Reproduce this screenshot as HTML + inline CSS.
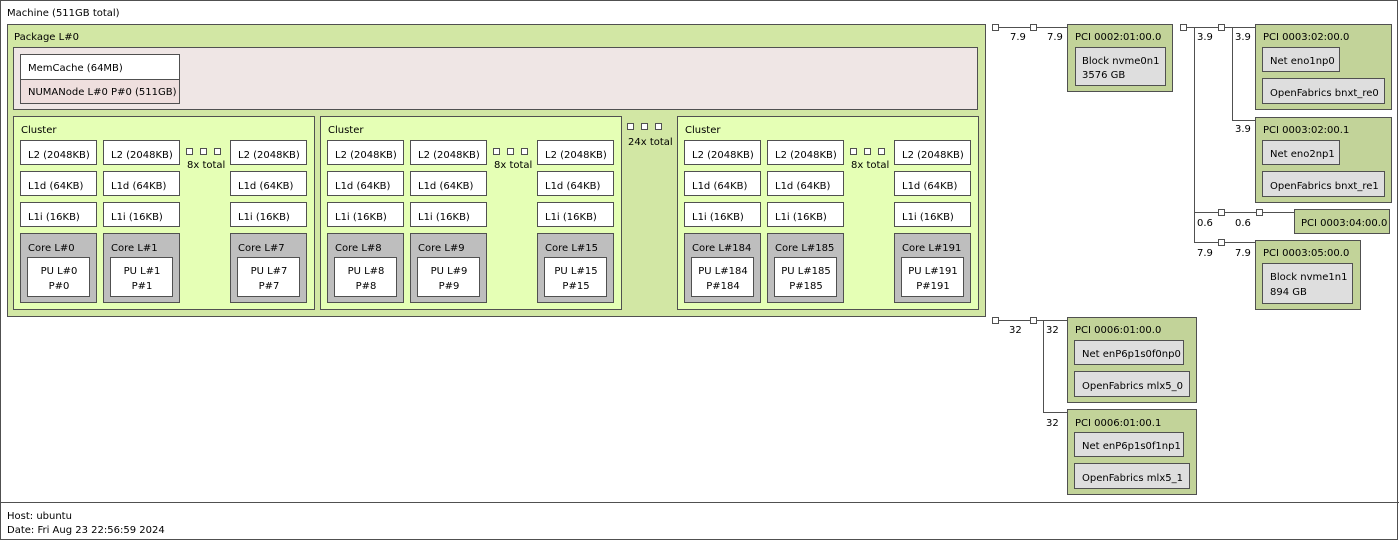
<!DOCTYPE html>
<html><head><meta charset="utf-8"><style>
html,body{margin:0;padding:0;background:#fff;width:1399px;height:541px;overflow:hidden}
svg text{font-family:"DejaVu Sans","Liberation Sans",sans-serif;font-size:10px;fill:#000}
</style></head><body>
<svg width="1399" height="541" xmlns="http://www.w3.org/2000/svg" shape-rendering="crispEdges">
<g stroke="#505050" stroke-width="1">
<rect x="0.5" y="0.5" width="1397" height="539" fill="#fff"/>
<line x1="0" y1="502.5" x2="1399" y2="502.5"/>
<rect x="7.5" y="24.5" width="978" height="292" fill="#d2e7a4"/>
<rect x="13.5" y="47.5" width="964" height="62" fill="#efe6e5"/>
<rect x="20.5" y="54.5" width="159" height="25" fill="#fff"/>
<rect x="20.5" y="79.5" width="159" height="24" fill="#efdfde"/>
</g>
<text x="7" y="16">Machine (511GB total)</text>
<text x="14" y="40">Package L#0</text>
<text x="28" y="71">MemCache (64MB)</text>
<text x="28" y="95">NUMANode L#0 P#0 (511GB)</text>
<g id="c1">
<rect x="13.5" y="116.5" width="301" height="193" fill="#e5ffb5" stroke="#505050"/>
<text x="21" y="133">Cluster</text>
<g stroke="#505050" fill="#fff">
<rect x="20.5" y="140.5" width="76" height="24"/><rect x="103.5" y="140.5" width="76" height="24"/><rect x="230.5" y="140.5" width="76" height="24"/>
<rect x="20.5" y="171.5" width="76" height="24"/><rect x="103.5" y="171.5" width="76" height="24"/><rect x="230.5" y="171.5" width="76" height="24"/>
<rect x="20.5" y="202.5" width="76" height="24"/><rect x="103.5" y="202.5" width="76" height="24"/><rect x="230.5" y="202.5" width="76" height="24"/>
<rect x="20.5" y="233.5" width="76" height="69" fill="#bebebe"/><rect x="103.5" y="233.5" width="76" height="69" fill="#bebebe"/><rect x="230.5" y="233.5" width="76" height="69" fill="#bebebe"/>
<rect x="27.5" y="257.5" width="62" height="39"/><rect x="110.5" y="257.5" width="62" height="39"/><rect x="237.5" y="257.5" width="62" height="39"/>
<rect x="186.5" y="148.5" width="6" height="6"/><rect x="200.5" y="148.5" width="6" height="6"/><rect x="214.5" y="148.5" width="6" height="6"/>
</g>
<text x="28" y="158">L2 (2048KB)</text><text x="111" y="158">L2 (2048KB)</text><text x="238" y="158">L2 (2048KB)</text>
<text x="28" y="189">L1d (64KB)</text><text x="111" y="189">L1d (64KB)</text><text x="238" y="189">L1d (64KB)</text>
<text x="28" y="220">L1i (16KB)</text><text x="111" y="220">L1i (16KB)</text><text x="238" y="220">L1i (16KB)</text>
<text x="187" y="168">8x total</text>
</g>
<g transform="translate(307,0)">
<rect x="13.5" y="116.5" width="301" height="193" fill="#e5ffb5" stroke="#505050"/>
<text x="21" y="133">Cluster</text>
<g stroke="#505050" fill="#fff">
<rect x="20.5" y="140.5" width="76" height="24"/><rect x="103.5" y="140.5" width="76" height="24"/><rect x="230.5" y="140.5" width="76" height="24"/>
<rect x="20.5" y="171.5" width="76" height="24"/><rect x="103.5" y="171.5" width="76" height="24"/><rect x="230.5" y="171.5" width="76" height="24"/>
<rect x="20.5" y="202.5" width="76" height="24"/><rect x="103.5" y="202.5" width="76" height="24"/><rect x="230.5" y="202.5" width="76" height="24"/>
<rect x="20.5" y="233.5" width="76" height="69" fill="#bebebe"/><rect x="103.5" y="233.5" width="76" height="69" fill="#bebebe"/><rect x="230.5" y="233.5" width="76" height="69" fill="#bebebe"/>
<rect x="27.5" y="257.5" width="62" height="39"/><rect x="110.5" y="257.5" width="62" height="39"/><rect x="237.5" y="257.5" width="62" height="39"/>
<rect x="186.5" y="148.5" width="6" height="6"/><rect x="200.5" y="148.5" width="6" height="6"/><rect x="214.5" y="148.5" width="6" height="6"/>
</g>
<text x="28" y="158">L2 (2048KB)</text><text x="111" y="158">L2 (2048KB)</text><text x="238" y="158">L2 (2048KB)</text>
<text x="28" y="189">L1d (64KB)</text><text x="111" y="189">L1d (64KB)</text><text x="238" y="189">L1d (64KB)</text>
<text x="28" y="220">L1i (16KB)</text><text x="111" y="220">L1i (16KB)</text><text x="238" y="220">L1i (16KB)</text>
<text x="187" y="168">8x total</text>
<text x="28" y="251">Core L#8</text><text x="111" y="251">Core L#9</text><text x="238" y="251">Core L#15</text>
<g text-anchor="middle"><text x="59" y="274">PU L#8</text><text x="59" y="289">P#8</text><text x="142" y="274">PU L#9</text><text x="142" y="289">P#9</text><text x="269" y="274">PU L#15</text><text x="269" y="289">P#15</text></g>
</g>
<g transform="translate(664,0)">
<rect x="13.5" y="116.5" width="301" height="193" fill="#e5ffb5" stroke="#505050"/>
<text x="21" y="133">Cluster</text>
<g stroke="#505050" fill="#fff">
<rect x="20.5" y="140.5" width="76" height="24"/><rect x="103.5" y="140.5" width="76" height="24"/><rect x="230.5" y="140.5" width="76" height="24"/>
<rect x="20.5" y="171.5" width="76" height="24"/><rect x="103.5" y="171.5" width="76" height="24"/><rect x="230.5" y="171.5" width="76" height="24"/>
<rect x="20.5" y="202.5" width="76" height="24"/><rect x="103.5" y="202.5" width="76" height="24"/><rect x="230.5" y="202.5" width="76" height="24"/>
<rect x="20.5" y="233.5" width="76" height="69" fill="#bebebe"/><rect x="103.5" y="233.5" width="76" height="69" fill="#bebebe"/><rect x="230.5" y="233.5" width="76" height="69" fill="#bebebe"/>
<rect x="27.5" y="257.5" width="62" height="39"/><rect x="110.5" y="257.5" width="62" height="39"/><rect x="237.5" y="257.5" width="62" height="39"/>
<rect x="186.5" y="148.5" width="6" height="6"/><rect x="200.5" y="148.5" width="6" height="6"/><rect x="214.5" y="148.5" width="6" height="6"/>
</g>
<text x="28" y="158">L2 (2048KB)</text><text x="111" y="158">L2 (2048KB)</text><text x="238" y="158">L2 (2048KB)</text>
<text x="28" y="189">L1d (64KB)</text><text x="111" y="189">L1d (64KB)</text><text x="238" y="189">L1d (64KB)</text>
<text x="28" y="220">L1i (16KB)</text><text x="111" y="220">L1i (16KB)</text><text x="238" y="220">L1i (16KB)</text>
<text x="187" y="168">8x total</text>
<text x="28" y="251">Core L#184</text><text x="111" y="251">Core L#185</text><text x="238" y="251">Core L#191</text>
<g text-anchor="middle"><text x="59" y="274">PU L#184</text><text x="59" y="289">P#184</text><text x="142" y="274">PU L#185</text><text x="142" y="289">P#185</text><text x="269" y="274">PU L#191</text><text x="269" y="289">P#191</text></g>
</g>
<text x="28" y="251">Core L#0</text><text x="111" y="251">Core L#1</text><text x="238" y="251">Core L#7</text>
<g text-anchor="middle"><text x="59" y="274">PU L#0</text><text x="59" y="289">P#0</text><text x="142" y="274">PU L#1</text><text x="142" y="289">P#1</text><text x="269" y="274">PU L#7</text><text x="269" y="289">P#7</text></g>
<g stroke="#505050" fill="#fff">
<rect x="627.5" y="123.5" width="6" height="6"/><rect x="641.5" y="123.5" width="6" height="6"/><rect x="655.5" y="123.5" width="6" height="6"/>
</g>
<text x="628" y="145">24x total</text>

<!-- PCI lines -->
<g stroke="#505050" fill="none">
<line x1="999" y1="27.5" x2="1030" y2="27.5"/><line x1="1037" y1="27.5" x2="1067" y2="27.5"/>
<line x1="1187" y1="27.5" x2="1218" y2="27.5"/><line x1="1225" y1="27.5" x2="1255" y2="27.5"/>
<line x1="1194.5" y1="27" x2="1194.5" y2="243"/>
<line x1="1232.5" y1="27" x2="1232.5" y2="120"/><line x1="1232" y1="120.5" x2="1255" y2="120.5"/>
<line x1="1194" y1="212.5" x2="1218" y2="212.5"/><line x1="1225" y1="212.5" x2="1256" y2="212.5"/><line x1="1263" y1="212.5" x2="1294" y2="212.5"/>
<line x1="1194" y1="242.5" x2="1218" y2="242.5"/><line x1="1225" y1="242.5" x2="1255" y2="242.5"/>
<line x1="999" y1="320.5" x2="1030" y2="320.5"/><line x1="1037" y1="320.5" x2="1067" y2="320.5"/>
<line x1="1043.5" y1="320" x2="1043.5" y2="412"/><line x1="1043" y1="412.5" x2="1067" y2="412.5"/>
</g>
<g stroke="#505050" fill="#fff">
<rect x="992.5" y="24.5" width="6" height="6"/><rect x="1030.5" y="24.5" width="6" height="6"/>
<rect x="1180.5" y="24.5" width="6" height="6"/><rect x="1218.5" y="24.5" width="6" height="6"/>
<rect x="1218.5" y="209.5" width="6" height="6"/><rect x="1256.5" y="209.5" width="6" height="6"/>
<rect x="1218.5" y="239.5" width="6" height="6"/>
<rect x="992.5" y="317.5" width="6" height="6"/><rect x="1030.5" y="317.5" width="6" height="6"/>
</g>
<text x="1010" y="40">7.9</text><text x="1047" y="40">7.9</text>
<text x="1197" y="40">3.9</text><text x="1235" y="40">3.9</text><text x="1235" y="132">3.9</text>
<text x="1197" y="226">0.6</text><text x="1235" y="226">0.6</text>
<text x="1197" y="256">7.9</text><text x="1235" y="256">7.9</text>
<text x="1009" y="333">32</text><text x="1046" y="333">32</text><text x="1046" y="426">32</text>

<g stroke="#505050">
<rect x="1067.5" y="24.5" width="105" height="67" fill="#c2d399"/>
<rect x="1075.5" y="47.5" width="90" height="38" fill="#dedede"/>
<rect x="1255.5" y="24.5" width="136" height="85" fill="#c2d399"/>
<rect x="1262.5" y="47.5" width="77" height="24" fill="#dedede"/>
<rect x="1262.5" y="78.5" width="122" height="25" fill="#dedede"/>
<rect x="1255.5" y="117.5" width="136" height="85" fill="#c2d399"/>
<rect x="1262.5" y="140.5" width="77" height="24" fill="#dedede"/>
<rect x="1262.5" y="171.5" width="122" height="25" fill="#dedede"/>
<rect x="1294.5" y="209.5" width="95" height="24" fill="#c2d399"/>
<rect x="1255.5" y="240.5" width="105" height="69" fill="#c2d399"/>
<rect x="1262.5" y="263.5" width="90" height="40" fill="#dedede"/>
<rect x="1067.5" y="317.5" width="129" height="85" fill="#c2d399"/>
<rect x="1074.5" y="340.5" width="109" height="24" fill="#dedede"/>
<rect x="1074.5" y="371.5" width="115" height="25" fill="#dedede"/>
<rect x="1067.5" y="409.5" width="129" height="85" fill="#c2d399"/>
<rect x="1074.5" y="432.5" width="109" height="24" fill="#dedede"/>
<rect x="1074.5" y="463.5" width="115" height="25" fill="#dedede"/>
</g>
<text x="1075" y="40">PCI 0002:01:00.0</text>
<text x="1082" y="64">Block nvme0n1</text><text x="1082" y="78">3576 GB</text>
<text x="1263" y="40">PCI 0003:02:00.0</text>
<text x="1270" y="64">Net eno1np0</text><text x="1270" y="96">OpenFabrics bnxt_re0</text>
<text x="1263" y="133">PCI 0003:02:00.1</text>
<text x="1270" y="157">Net eno2np1</text><text x="1270" y="189">OpenFabrics bnxt_re1</text>
<text x="1301" y="226">PCI 0003:04:00.0</text>
<text x="1263" y="256">PCI 0003:05:00.0</text>
<text x="1270" y="280">Block nvme1n1</text><text x="1270" y="295">894 GB</text>
<text x="1075" y="333">PCI 0006:01:00.0</text>
<text x="1082" y="357">Net enP6p1s0f0np0</text><text x="1082" y="389">OpenFabrics mlx5_0</text>
<text x="1075" y="426">PCI 0006:01:00.1</text>
<text x="1082" y="449">Net enP6p1s0f1np1</text><text x="1082" y="481">OpenFabrics mlx5_1</text>

<text x="7" y="519">Host: ubuntu</text>
<text x="7" y="533">Date: Fri Aug 23 22:56:59 2024</text>
</svg>
</body></html>
